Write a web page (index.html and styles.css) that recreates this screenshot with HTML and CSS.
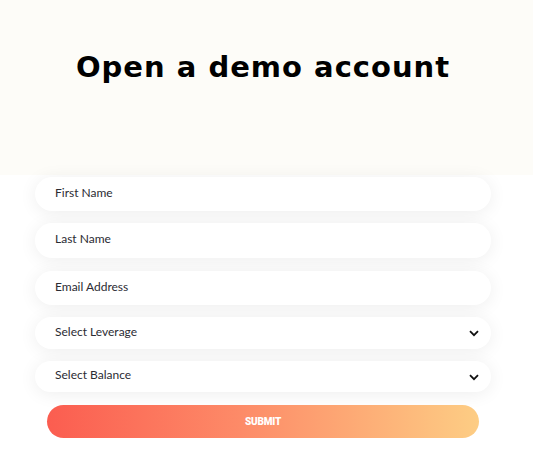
FILE: index.html
```html
<!DOCTYPE html>
<html>
<head>
<meta charset="utf-8">
<link rel="stylesheet" href="styles.css">
</head>
<body>
<header class="hero">
  <h1 class="title">Open a demo account</h1>
</header>
<form class="form">
  <div class="field"><span class="label">First Name</span></div>
  <div class="field tall"><span class="label">Last Name</span></div>
  <div class="field"><span class="label">Email Address</span></div>
  <div class="field select"><span class="label">Select Leverage</span>
    <svg class="chev" width="10" height="7" viewBox="0 0 10 7"><path d="M1 1.2 L5 5.2 L9 1.2" fill="none" stroke="#111" stroke-width="1.8"/></svg>
  </div>
  <div class="field select short"><span class="label">Select Balance</span>
    <svg class="chev" width="10" height="7" viewBox="0 0 10 7"><path d="M1 1.2 L5 5.2 L9 1.2" fill="none" stroke="#111" stroke-width="1.8"/></svg>
  </div>
  <div class="btnwrap"><button type="button" class="submit">SUBMIT</button></div>
</form>
</body>
</html>
```
FILE: styles.css
```css
html, body { margin: 0; padding: 0; background: #fff; }
body { font-family: "Lato", "Open Sans", sans-serif; }
.hero {
  height: 175px;
  background: #fdfcf8;
  display: flex;
  justify-content: center;
  align-items: flex-start;
}
.title {
  margin: 47px 0 0 -7px;
  font-family: "DejaVu Sans", sans-serif;
  font-weight: 700;
  font-size: 29px;
  line-height: 40px;
  color: #000;
  letter-spacing: 1px;
}
.form {
  margin: 2px 0 0 35px;
  width: 456px;
  display: flex;
  flex-direction: column;
  gap: 12px;
}
.field {
  height: 34px;
  background: #fff;
  border-radius: 17px;
  box-shadow: 0 2px 18px rgba(0,0,0,0.07);
  display: flex;
  align-items: center;
  justify-content: space-between;
  padding: 0 12px 0 20px;
  box-sizing: border-box;
}
.field.tall { height: 35px; margin-bottom: 1px; }
.field.select { height: 32px; border-radius: 16px; }
.field.select.short { height: 31px; }
.label {
  font-size: 12px;
  color: #2b2b33;
  margin-top: -4px;
}
.chev { margin-top: 1px; }
.btnwrap { padding: 1px 12px 0; }
.submit {
  width: 100%;
  height: 33px;
  border: 0;
  border-radius: 17px;
  background: linear-gradient(90deg, #fb5d50 0%, #fd8b68 45%, #fdcd84 100%);
  color: #fff;
  font-family: "Roboto", sans-serif;
  font-weight: 900;
  font-size: 10px;
  letter-spacing: -0.2px;
  padding: 0;
}
```
